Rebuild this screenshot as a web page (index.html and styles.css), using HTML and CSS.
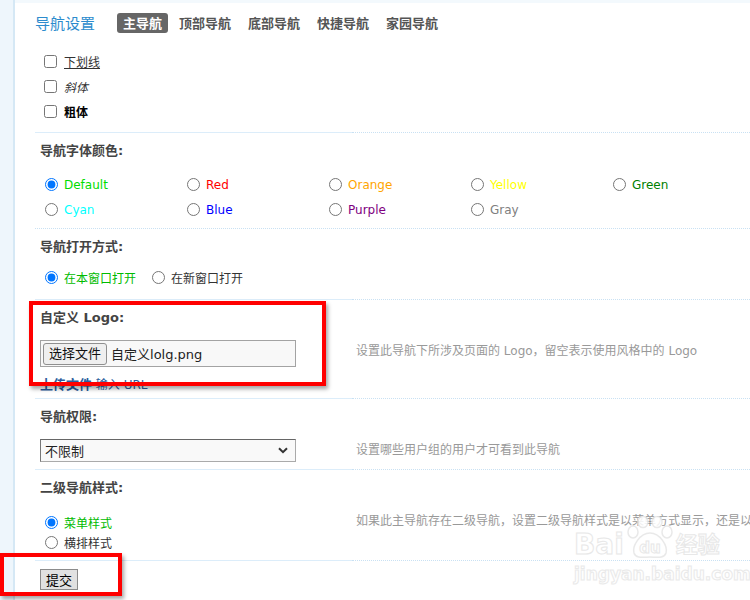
FILE: index.html
```html
<!DOCTYPE html>
<html lang="zh-CN">
<head>
  <meta charset="UTF-8" />
  <title>导航设置</title>
  <link rel="stylesheet" href="styles.css">
</head>
<body>

  <!-- left frame strip -->
  <div class="rail"></div>

  <div class="main">
    <div class="head">
      <h2 class="title">导航设置</h2>
      <ul class="tabs">
        <li class="on">主导航</li>
        <li>顶部导航</li>
        <li>底部导航</li>
        <li>快捷导航</li>
        <li>家园导航</li>
      </ul>
    </div>

    <!-- text style -->
    <div class="row">
      <div class="cell form checks">
        <label class="check"><input type="checkbox"><span class="under">下划线</span></label>
        <label class="check"><input type="checkbox"><span class="ital">斜体</span></label>
        <label class="check"><input type="checkbox"><span class="bold">粗体</span></label>
      </div>
      <div class="cell tip"></div>
    </div>

    <!-- colour -->
    <div class="sec-title">导航字体颜色:</div>
    <div class="full colors">
      <label class="opt"><input type="radio" name="color" checked><span class="c-default">Default</span></label>
      <label class="opt"><input type="radio" name="color"><span class="c-red">Red</span></label>
      <label class="opt"><input type="radio" name="color"><span class="c-orange">Orange</span></label>
      <label class="opt"><input type="radio" name="color"><span class="c-yellow">Yellow</span></label>
      <label class="opt"><input type="radio" name="color"><span class="c-green">Green</span></label>
      <label class="opt"><input type="radio" name="color"><span class="c-cyan">Cyan</span></label>
      <label class="opt"><input type="radio" name="color"><span class="c-blue">Blue</span></label>
      <label class="opt"><input type="radio" name="color"><span class="c-purple">Purple</span></label>
      <label class="opt"><input type="radio" name="color"><span class="c-gray">Gray</span></label>
    </div>

    <!-- open target -->
    <div class="sec-title">导航打开方式:</div>
    <div class="row">
      <div class="cell form target">
        <label class="opt"><input type="radio" name="target" checked><span class="c-on">在本窗口打开</span></label>
        <label class="opt"><input type="radio" name="target"><span>在新窗口打开</span></label>
      </div>
      <div class="cell tip"></div>
    </div>

    <!-- logo -->
    <div class="sec-title">自定义 Logo:</div>
    <div class="row">
      <div class="cell form logo">
        <div class="file">
          <span class="file-btn">选择文件</span>
          <span class="file-name">自定义lolg.png</span>
        </div>
        <div class="upload"><b>上传文件</b> 输入 URL</div>
      </div>
      <div class="cell tip">设置此导航下所涉及页面的 Logo，留空表示使用风格中的 Logo</div>
    </div>

    <!-- permission -->
    <div class="sec-title">导航权限:</div>
    <div class="row">
      <div class="cell form perm">
        <div class="select">
          <select>
            <option>不限制</option>
          </select>
          <svg class="chev" width="10" height="7" viewBox="0 0 10 7"><path d="M1 1.2 L5 5.2 L9 1.2" fill="none" stroke="#333" stroke-width="2"/></svg>
        </div>
      </div>
      <div class="cell tip">设置哪些用户组的用户才可看到此导航</div>
    </div>

    <!-- sub nav style -->
    <div class="sec-title">二级导航样式:</div>
    <div class="row">
      <div class="cell form substyle">
        <label class="opt"><input type="radio" name="sub" checked><span class="c-on">菜单样式</span></label>
        <label class="opt"><input type="radio" name="sub"><span>横排样式</span></label>
      </div>
      <div class="cell tip">如果此主导航存在二级导航，设置二级导航样式是以菜单方式显示，还是以</div>
    </div>

    <div class="submit">
      <button class="btn">提交</button>
    </div>
  </div>

  <!-- red annotation boxes -->
  <div class="mark mark-logo"></div>
  <div class="mark mark-submit"></div>

  <!-- watermark -->
  <div class="watermark">
    <div class="wm-top">
      <span class="wm-bai">Bai</span>
      <svg class="wm-paw" width="52" height="44" viewBox="0 0 52 44">
        <g fill="#fff" stroke="#e6e6e6" stroke-width="1.5">
          <ellipse cx="9" cy="16" rx="5" ry="6"/>
          <ellipse cx="19" cy="6" rx="5" ry="5.5"/>
          <ellipse cx="33" cy="6" rx="5" ry="5.5"/>
          <ellipse cx="43" cy="16" rx="5" ry="6"/>
          <path d="M26 17 C16 17 8 30 10 37 C12 43 20 41 26 41 C32 41 40 43 42 37 C44 30 36 17 26 17 Z"/>
        </g>
        <text x="26" y="37" text-anchor="middle" class="wm-du">du</text>
      </svg>
      <span class="wm-cn">经验</span>
    </div>
    <div class="wm-url">jingyan.baidu.com</div>
  </div>

</body>
</html>
```

FILE: styles.css
```css
body {
  margin: 0;
  font-family: "DejaVu Sans", "Noto Sans CJK SC", sans-serif;
  font-size: 12px;
  color: #333;
  background: #fff;
  display: flex;
  overflow: hidden;
  height: 600px;
}

.rail {
  flex: none;
  width: 13px;
  background: #eef6fc;
  border-right: 2px solid #d5e8f5;
}

.main {
  flex: 1;
  min-width: 0;
  padding-left: 20px;
  border-top: 3px solid #f3f9fd;
  white-space: nowrap;
}

/* header */
.head {
  display: flex;
  align-items: flex-start;
  height: 46px;
  box-sizing: border-box;
  padding-top: 10px;
}

.title {
  margin: 0;
  font-size: 15px;
  line-height: 20px;
  font-weight: normal;
  color: #2c8bcd;
  font-family: "Noto Sans CJK SC", sans-serif;
}

.tabs {
  display: flex;
  gap: 5px;
  margin: 0 0 0 22px;
  padding: 0;
  list-style: none;
}

.tabs li {
  padding: 0 6px;
  font-size: 13px;
  line-height: 20px;
  font-weight: bold;
  color: #555;
  font-family: "Noto Sans CJK SC", sans-serif;
}

.tabs li.on {
  background: #666;
  color: #fff;
  border-radius: 3px;
}

/* rows */
.row {
  display: grid;
  grid-template-columns: 317px 1fr;
}

.cell {
  border-bottom: 1px dotted #c9e1f3;
}

.cell.form {
  border-bottom: 1px solid #dcedfa;
  padding-left: 5px;
}

.full {
  border-bottom: 1px dotted #c9e1f3;
}

.tip {
  padding: 13px 0 0 4px;
  line-height: 20px;
  color: #999;
  overflow: hidden;
}

.sec-title {
  padding: 8px 0 0 5px;
  line-height: 20px;
  font-size: 13px;
  font-weight: bold;
  color: #444;
}

input[type="checkbox"], input[type="radio"] {
  margin: 0;
  width: 13px;
  height: 13px;
}

/* checkboxes */
.checks {
  padding: 0 0 8px 9px !important;
}

.check {
  display: flex;
  align-items: center;
  gap: 7px;
  height: 25px;
}

.under { text-decoration: underline; }
.ital { font-style: italic; }
.bold { font-weight: bold; color: #000; }

/* radios */
.opt {
  display: flex;
  align-items: center;
  gap: 6px;
}

.colors {
  display: grid;
  grid-template-columns: repeat(5, 142px);
  grid-auto-rows: 25px;
  padding: 11px 0 6px 10px;
}

.c-default { color: #00dd00; }
.c-red { color: #ff0000; }
.c-orange { color: #ffa500; }
.c-yellow { color: #ffff00; }
.c-green { color: #008000; }
.c-cyan { color: #00ffff; }
.c-blue { color: #0000ff; }
.c-purple { color: #800080; }
.c-gray { color: #808080; }
.c-on { color: #00bb00; }

.target {
  display: flex;
  gap: 16px;
  height: 25px;
  padding: 8px 0 9px 10px !important;
}

/* logo */
.logo {
  padding-top: 12px;
  padding-bottom: 3px;
}

.file {
  display: flex;
  align-items: center;
  width: 256px;
  height: 27px;
  box-sizing: border-box;
  border: 1px solid #a3a3a3;
  background: #f8f8f8;
  padding-left: 2px;
}

.file-btn {
  height: 22px;
  line-height: 20px;
  box-sizing: border-box;
  padding: 0 5px;
  border: 1px solid #8f8f8f;
  border-radius: 3px;
  background: #efefef;
  font-size: 13px;
  color: #111;
}

.file-name {
  margin-left: 4px;
  font-size: 13px;
  color: #222;
}

.upload {
  margin-top: 8px;
  line-height: 20px;
  color: #2a5d9c;
}

.upload b {
  font-size: 13px;
}

/* permission */
.perm {
  padding-top: 12px;
  padding-bottom: 7px;
}

.select {
  position: relative;
  width: 256px;
  height: 23px;
}

.select select {
  appearance: none;
  width: 100%;
  height: 23px;
  box-sizing: border-box;
  margin: 0;
  padding: 0 0 0 4px;
  border: 1px solid #aaa;
  border-top-color: #666;
  border-left-color: #777;
  border-radius: 0;
  background: #f9f9f9;
  font-family: "Noto Sans CJK SC", sans-serif;
  font-size: 13px;
  color: #222;
}

.chev {
  position: absolute;
  right: 8px;
  top: 8px;
  pointer-events: none;
}

/* sub style */
.substyle {
  padding: 14px 0 8px 10px !important;
}

.substyle .opt {
  height: 20px;
}

/* submit */
.submit {
  padding: 8px 0 0 5px;
}

.btn {
  height: 21px;
  padding: 0 5px;
  margin: 0;
  border: 1px solid #8c8c8c;
  background: #e1e1e1;
  font-family: "Noto Sans CJK SC", sans-serif;
  font-size: 13px;
  color: #000;
  border-radius: 0;
}

/* annotations */
.mark {
  position: absolute;
  box-sizing: border-box;
  border: 4px solid #ff0000;
  box-shadow: 2px 3px 4px rgba(0, 0, 0, 0.35);
}

.mark-logo {
  left: 29px;
  top: 301px;
  width: 297px;
  height: 85px;
}

.mark-submit {
  left: 0;
  top: 553px;
  width: 122px;
  height: 43px;
}

/* watermark */
.watermark {
  position: absolute;
  left: 574px;
  top: 516px;
  pointer-events: none;
  opacity: 0.85;
}

.wm-top {
  display: flex;
  align-items: flex-end;
}

.wm-bai, .wm-cn {
  font-family: "DejaVu Sans", "Noto Sans CJK SC", sans-serif;
  font-size: 28px;
  font-weight: bold;
  line-height: 30px;
  color: #fff;
  -webkit-text-stroke: 1px #e4e4e4;
}

.wm-cn {
  font-size: 22px;
}

.wm-du {
  font-family: "DejaVu Sans", sans-serif;
  font-size: 15px;
  font-weight: bold;
  fill: #fff;
  stroke: #e4e4e4;
  stroke-width: 1;
}

.wm-url {
  margin-top: 4px;
  font-size: 17px;
  font-weight: bold;
  color: #fff;
  -webkit-text-stroke: 1px #e6e6e6;
}
```
